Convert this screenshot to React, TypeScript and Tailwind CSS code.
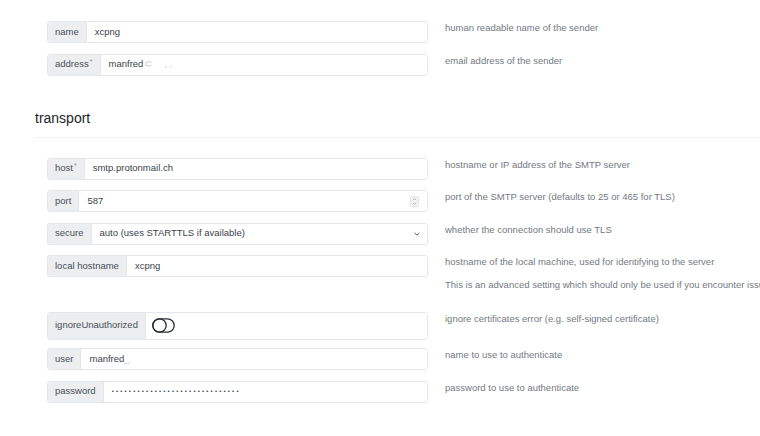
import React from 'react';

interface FieldProps {
  label: string;
  required?: boolean;
  children: React.ReactNode;
  tall?: boolean;
}

const Field: React.FC<FieldProps> = ({ label, required, children, tall }) => (
  <div className={`flex w-[381px] ${tall ? 'h-[28px]' : 'h-[22px]'} border border-[#e3e6ea] rounded-[3px] overflow-hidden`}>
    <div className="flex items-center px-[7px] bg-[#eceef0] text-[#495057] border-r border-[#e3e6ea] whitespace-nowrap">
      {label}
      {required && <span className="text-[7px] text-[#8a9099] ml-[1px] -mt-[4px]">*</span>}
    </div>
    <div className="flex flex-1 items-center px-[8px] bg-white text-[#3d4349] min-w-0">{children}</div>
  </div>
);

const Row: React.FC<{ field: React.ReactNode; desc: React.ReactNode; className?: string }> = ({
  field,
  desc,
  className = 'mb-[10.5px]',
}) => (
  <div className={`flex items-start gap-[17px] ${className}`}>
    {field}
    <div className="text-[#737a82] leading-[14px] whitespace-nowrap">{desc}</div>
  </div>
);

const Spinner = () => (
  <svg width="9" height="11" viewBox="0 0 9 11" className="ml-auto">
    <rect x="0.5" y="0.5" width="8" height="10" rx="1.5" fill="#f3f4f5" stroke="#e2e4e6" />
    <path d="M2.8 4.2 L4.5 2.6 L6.2 4.2" fill="none" stroke="#9aa0a6" strokeWidth="0.8" />
    <path d="M2.8 6.8 L4.5 8.4 L6.2 6.8" fill="none" stroke="#9aa0a6" strokeWidth="0.8" />
  </svg>
);

const Chevron = () => (
  <svg width="8" height="6" viewBox="0 0 8 6" className="ml-auto mr-[-2px]">
    <path d="M1.5 1.8 L4 4.2 L6.5 1.8" fill="none" stroke="#555b61" strokeWidth="1" />
  </svg>
);

const ToggleOff = () => (
  <svg width="23" height="15" viewBox="0 0 23 15" className="-ml-[2px]">
    <rect x="0.8" y="0.8" width="21.4" height="13.4" rx="6.7" fill="none" stroke="#2b2f33" strokeWidth="1.3" />
    <circle cx="7.5" cy="7.5" r="6.7" fill="none" stroke="#2b2f33" strokeWidth="1.3" />
  </svg>
);

export default function App() {
  return (
    <div className="w-[760px] h-[436px] overflow-hidden bg-white text-[9.5px] font-['Liberation_Sans',Arial,sans-serif]">
      <div className="w-[1000px] pl-[35px] pt-[21px]">
        <div className="pl-[12px]">
          <Row
            field={<Field label="name">xcpng</Field>}
            desc="human readable name of the sender"
          />
          <Row
            field={
              <Field label="address" required>
                manfred<span className="text-[#c4c8cc] ml-[1px]">⊂</span>
                <span className="text-[#c4c8cc] ml-[12px]">, .</span>
              </Field>
            }
            desc="email address of the sender"
          />
        </div>

        <h2 className="mt-[33px] text-[14px] leading-[18px] text-[#212529]">transport</h2>
        <div className="mt-[10px] mb-[20px] border-t border-[#f0f1f2]" />

        <div className="pl-[12px]">
          <Row
            field={<Field label="host" required>smtp.protonmail.ch</Field>}
            desc="hostname or IP address of the SMTP server"
          />
          <Row
            field={
              <Field label="port">
                587
                <Spinner />
              </Field>
            }
            desc="port of the SMTP server (defaults to 25 or 465 for TLS)"
          />
          <Row
            field={
              <Field label="secure">
                auto (uses STARTTLS if available)
                <Chevron />
              </Field>
            }
            desc="whether the connection should use TLS"
          />
          <Row
            field={<Field label="local hostname">xcpng</Field>}
            desc={
              <>
                <p>hostname of the local machine, used for identifying to the server</p>
                <p className="mt-[9px] mb-[9px]">
                  This is an advanced setting which should only be used if you encounter issues
                </p>
              </>
            }
          />
          <Row
            className="mb-[8.5px]"
            field={
              <Field label="ignoreUnauthorized" tall>
                <ToggleOff />
              </Field>
            }
            desc="ignore certificates error (e.g. self-signed certificate)"
          />
          <Row
            field={
              <Field label="user">
                manfred<span className="text-[#c4c8cc]">_</span>
              </Field>
            }
            desc="name to use to authenticate"
          />
          <Row
            field={
              <Field label="password">
                <span className="text-[6px] tracking-[2.2px] text-[#3d4349]">
                  ••••••••••••••••••••••••••••••
                </span>
              </Field>
            }
            desc="password to use to authenticate"
          />
        </div>
      </div>
    </div>
  );
}
